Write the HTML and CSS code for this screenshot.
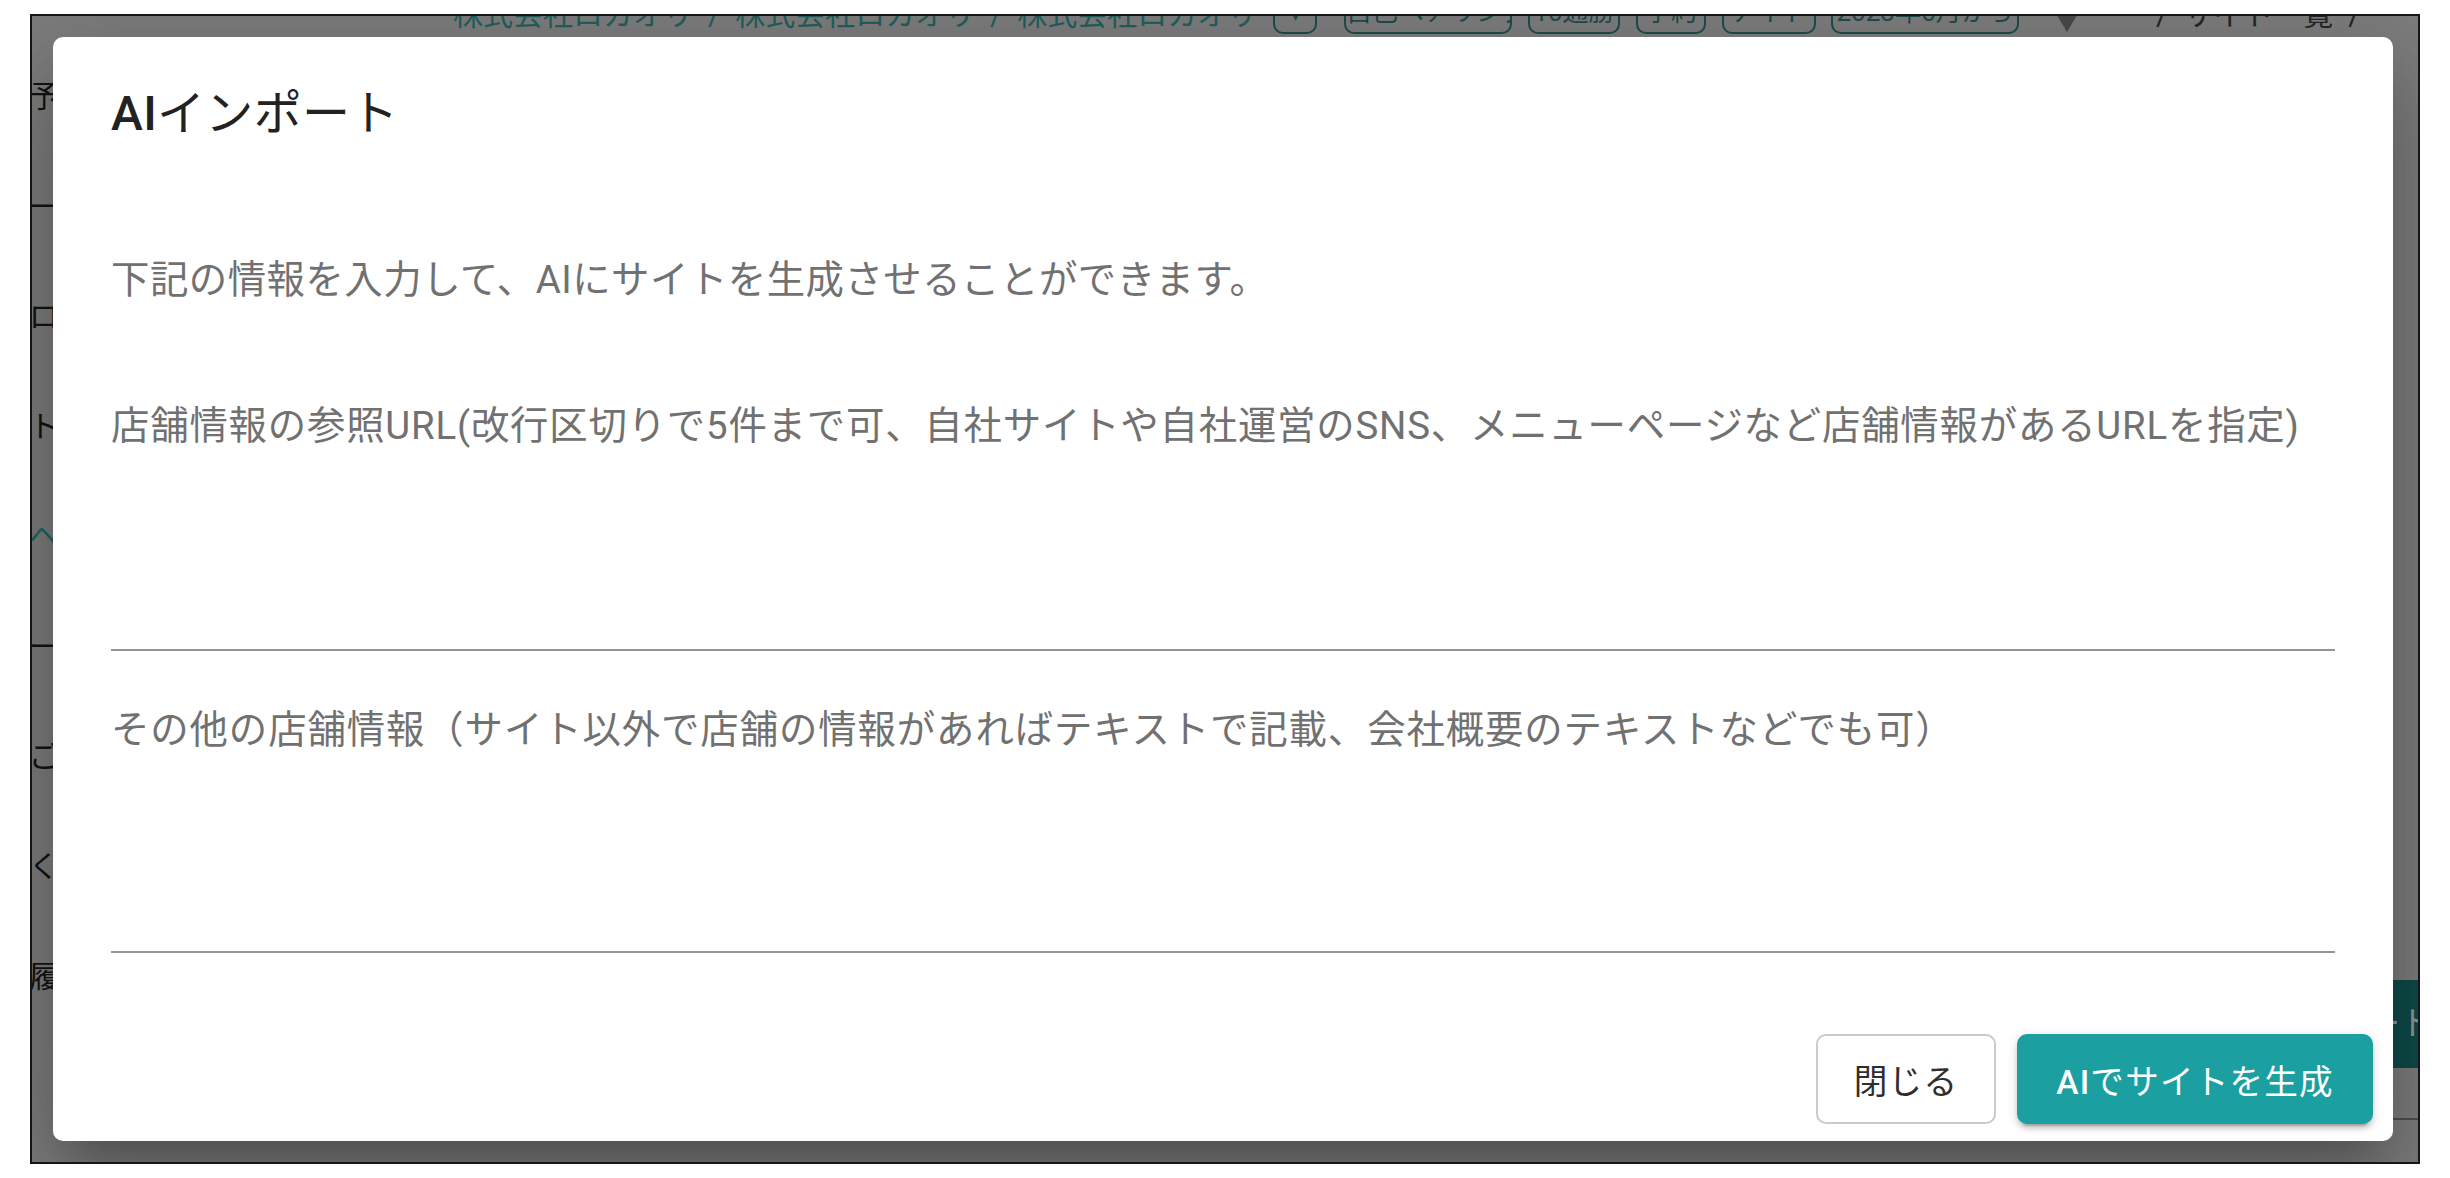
FILE: index.html
```html
<!DOCTYPE html>
<html lang="ja">
<head>
<meta charset="utf-8">
<title>AIインポート</title>
<link rel="stylesheet" href="styles.css">
</head>
<body>
<div class="frame">
  <div class="app">
    <nav class="sidebar">
      <div class="side-item">予約管理</div>
      <div class="side-item">一覧</div>
      <div class="side-item">ロゴ</div>
      <div class="side-item">ト</div>
      <div class="side-item active">ヘ</div>
      <div class="side-item">ー</div>
      <div class="side-item">ご</div>
      <div class="side-item">く</div>
      <div class="side-item">履歴</div>
    </nav>
    <main class="main">
      <div class="topbar">
        <span class="crumb">株式会社ロカオリ&nbsp; / &nbsp;株式会社ロカオリ&nbsp; / &nbsp;株式会社ロカオリ</span>
        <span class="chip c1">▾</span>
        <span class="chip c2">自己ペアリング</span>
        <span class="chip c3">10通勝</span>
        <span class="chip c4">予約</span>
        <span class="chip c5">ナイト</span>
        <span class="chip c6">2023年6月から</span>
        <span class="tri"></span>
        <span class="crumb2">/&nbsp; サイト一覧&nbsp; /</span>
      </div>
      <div class="action-row">
        <span class="bg-btn"><span class="latin">AI</span>インポート</span>
      </div>
      <div class="divider"></div>
    </main>
  </div>

  <div class="dialog" role="dialog">
    <h2 class="d-title"><span class="latin">AI</span>インポート</h2>
    <div class="d-body">
      <p class="desc">下記の情報を入力して、AIにサイトを生成させることができます。</p>
      <div class="field f1">
        <label class="f-label">店舗情報の参照URL(改行区切りで5件まで可、自社サイトや自社運営のSNS、メニューページなど店舗情報があるURLを指定)</label>
        <div class="f-area"></div>
      </div>
      <div class="field f2">
        <label class="f-label">その他の店舗情報（サイト以外で店舗の情報があればテキストで記載、会社概要のテキストなどでも可）</label>
        <div class="f-area"></div>
      </div>
    </div>
    <div class="d-actions">
      <button class="btn btn-close">閉じる</button>
      <button class="btn btn-primary"><span class="latin">AI</span>でサイトを生成</button>
    </div>
  </div>
</div>
</body>
</html>
```

FILE: styles.css
```css
* { box-sizing: border-box; }

html, body {
  margin: 0;
  padding: 0;
  background: #ffffff;
}

body {
  font-family: Roboto, "Noto Sans CJK JP", sans-serif;
}

.frame {
  position: relative;
  margin: 14px 0 0 30px;
  width: 2390px;
  height: 1150px;
  border: 2px solid #161616;
  background: #7d7d7d;
  overflow: hidden;
}

/* ---------- dimmed app behind the dialog ---------- */
.app {
  display: flex;
  height: 100%;
}

.sidebar {
  flex: 0 0 260px;
  display: flex;
  flex-direction: column;
  padding-top: 26px;
}

.side-item {
  height: 110px;
  line-height: 110px;
  margin-left: -3px;
  font-size: 30px;
  color: #141414;
  white-space: nowrap;
}

.side-item.active {
  color: #1d6764;
}

.main {
  flex: 1;
  display: flex;
  flex-direction: column;
  min-width: 0;
}

.topbar {
  display: flex;
  align-items: center;
  height: 44px;
  margin-top: -26px;
  padding-left: 161px;
  font-size: 30px;
  white-space: nowrap;
}

.crumb {
  width: 797px;
  overflow: hidden;
  color: #22605c;
}

.chip {
  height: 44px;
  line-height: 40px;
  border: 2px solid #1f4c49;
  border-radius: 10px;
  color: #1f4c49;
  text-align: center;
  overflow: hidden;
  font-size: 26px;
  margin-left: 16px;
}

.c1 { width: 44px; margin-left: 23px; }
.c2 { width: 168px; margin-left: 27px; }
.c3 { width: 92px; }
.c4 { width: 70px; }
.c5 { width: 94px; }
.c6 { width: 188px; margin-left: 15px; }

.tri {
  align-self: flex-start;
  margin-top: 12px;
  margin-left: 30px;
  width: 0;
  height: 0;
  border-left: 18px solid transparent;
  border-right: 18px solid transparent;
  border-top: 30px solid #4a4a4a;
}

.crumb2 {
  margin-left: 71px;
  color: #262626;
}

.action-row {
  display: flex;
  justify-content: flex-end;
  margin-top: 946px;
  margin-right: -53px;
}

.bg-btn {
  height: 88px;
  line-height: 88px;
  padding: 0 38px;
  background: #0e4b49;
  color: #8d9a99;
  font-size: 33px;
  border-radius: 10px 0 0 10px;
  white-space: nowrap;
}

.divider {
  margin-top: 50px;
  height: 2px;
  background: #4f4f4f;
}

/* ---------- dialog ---------- */
.dialog {
  position: absolute;
  left: 21px;
  top: 21px;
  width: 2340px;
  height: 1104px;
  display: flex;
  flex-direction: column;
  background: #ffffff;
  border-radius: 10px;
  box-shadow:
    0 26px 36px -17px rgba(0, 0, 0, 0.2),
    0 58px 91px 7px rgba(0, 0, 0, 0.14),
    0 22px 110px 19px rgba(0, 0, 0, 0.12);
}

.latin {
  font-weight: 500;
}

.d-title {
  margin: 0;
  padding: 38px 58px 0;
  font-size: 48px;
  line-height: 77px;
  font-weight: 400;
  color: #222222;
  letter-spacing: 0.3px;
}

.d-body {
  padding: 0 58px;
  color: #717171;
  font-size: 38.4px;
  letter-spacing: 0.8px;
}

.desc {
  margin: 99px 0 0;
  line-height: 58px;
  letter-spacing: 0.5px;
}

.field {
  display: flex;
  flex-direction: column;
}

.f1 { margin-top: 88px; }
.f2 { margin-top: 50px; }

.f-label {
  display: block;
  line-height: 58px;
  white-space: nowrap;
}

.f2 .f-label { letter-spacing: 0.9px; }

.f-area {
  border-bottom: 2px solid #959595;
}

.f1 .f-area { height: 196px; }
.f2 .f-area { height: 194px; }

.d-actions {
  margin-top: auto;
  display: flex;
  justify-content: flex-end;
  gap: 21px;
  padding: 0 20px 17px;
}

.btn {
  height: 90px;
  border-radius: 10px;
  font-family: Roboto, "Noto Sans CJK JP", sans-serif;
  font-size: 33.6px;
  letter-spacing: 1.2px;
  cursor: pointer;
  padding: 0;
}

.btn-close {
  width: 180px;
  background: #ffffff;
  border: 2px solid #cacaca;
  color: #2e2e2e;
}

.btn-primary {
  width: 356px;
  background: #1b9fa1;
  border: none;
  color: #ffffff;
  box-shadow:
    0 7px 2px -5px rgba(0, 0, 0, 0.2),
    0 5px 5px 0 rgba(0, 0, 0, 0.14),
    0 2px 12px 0 rgba(0, 0, 0, 0.12);
}
```
